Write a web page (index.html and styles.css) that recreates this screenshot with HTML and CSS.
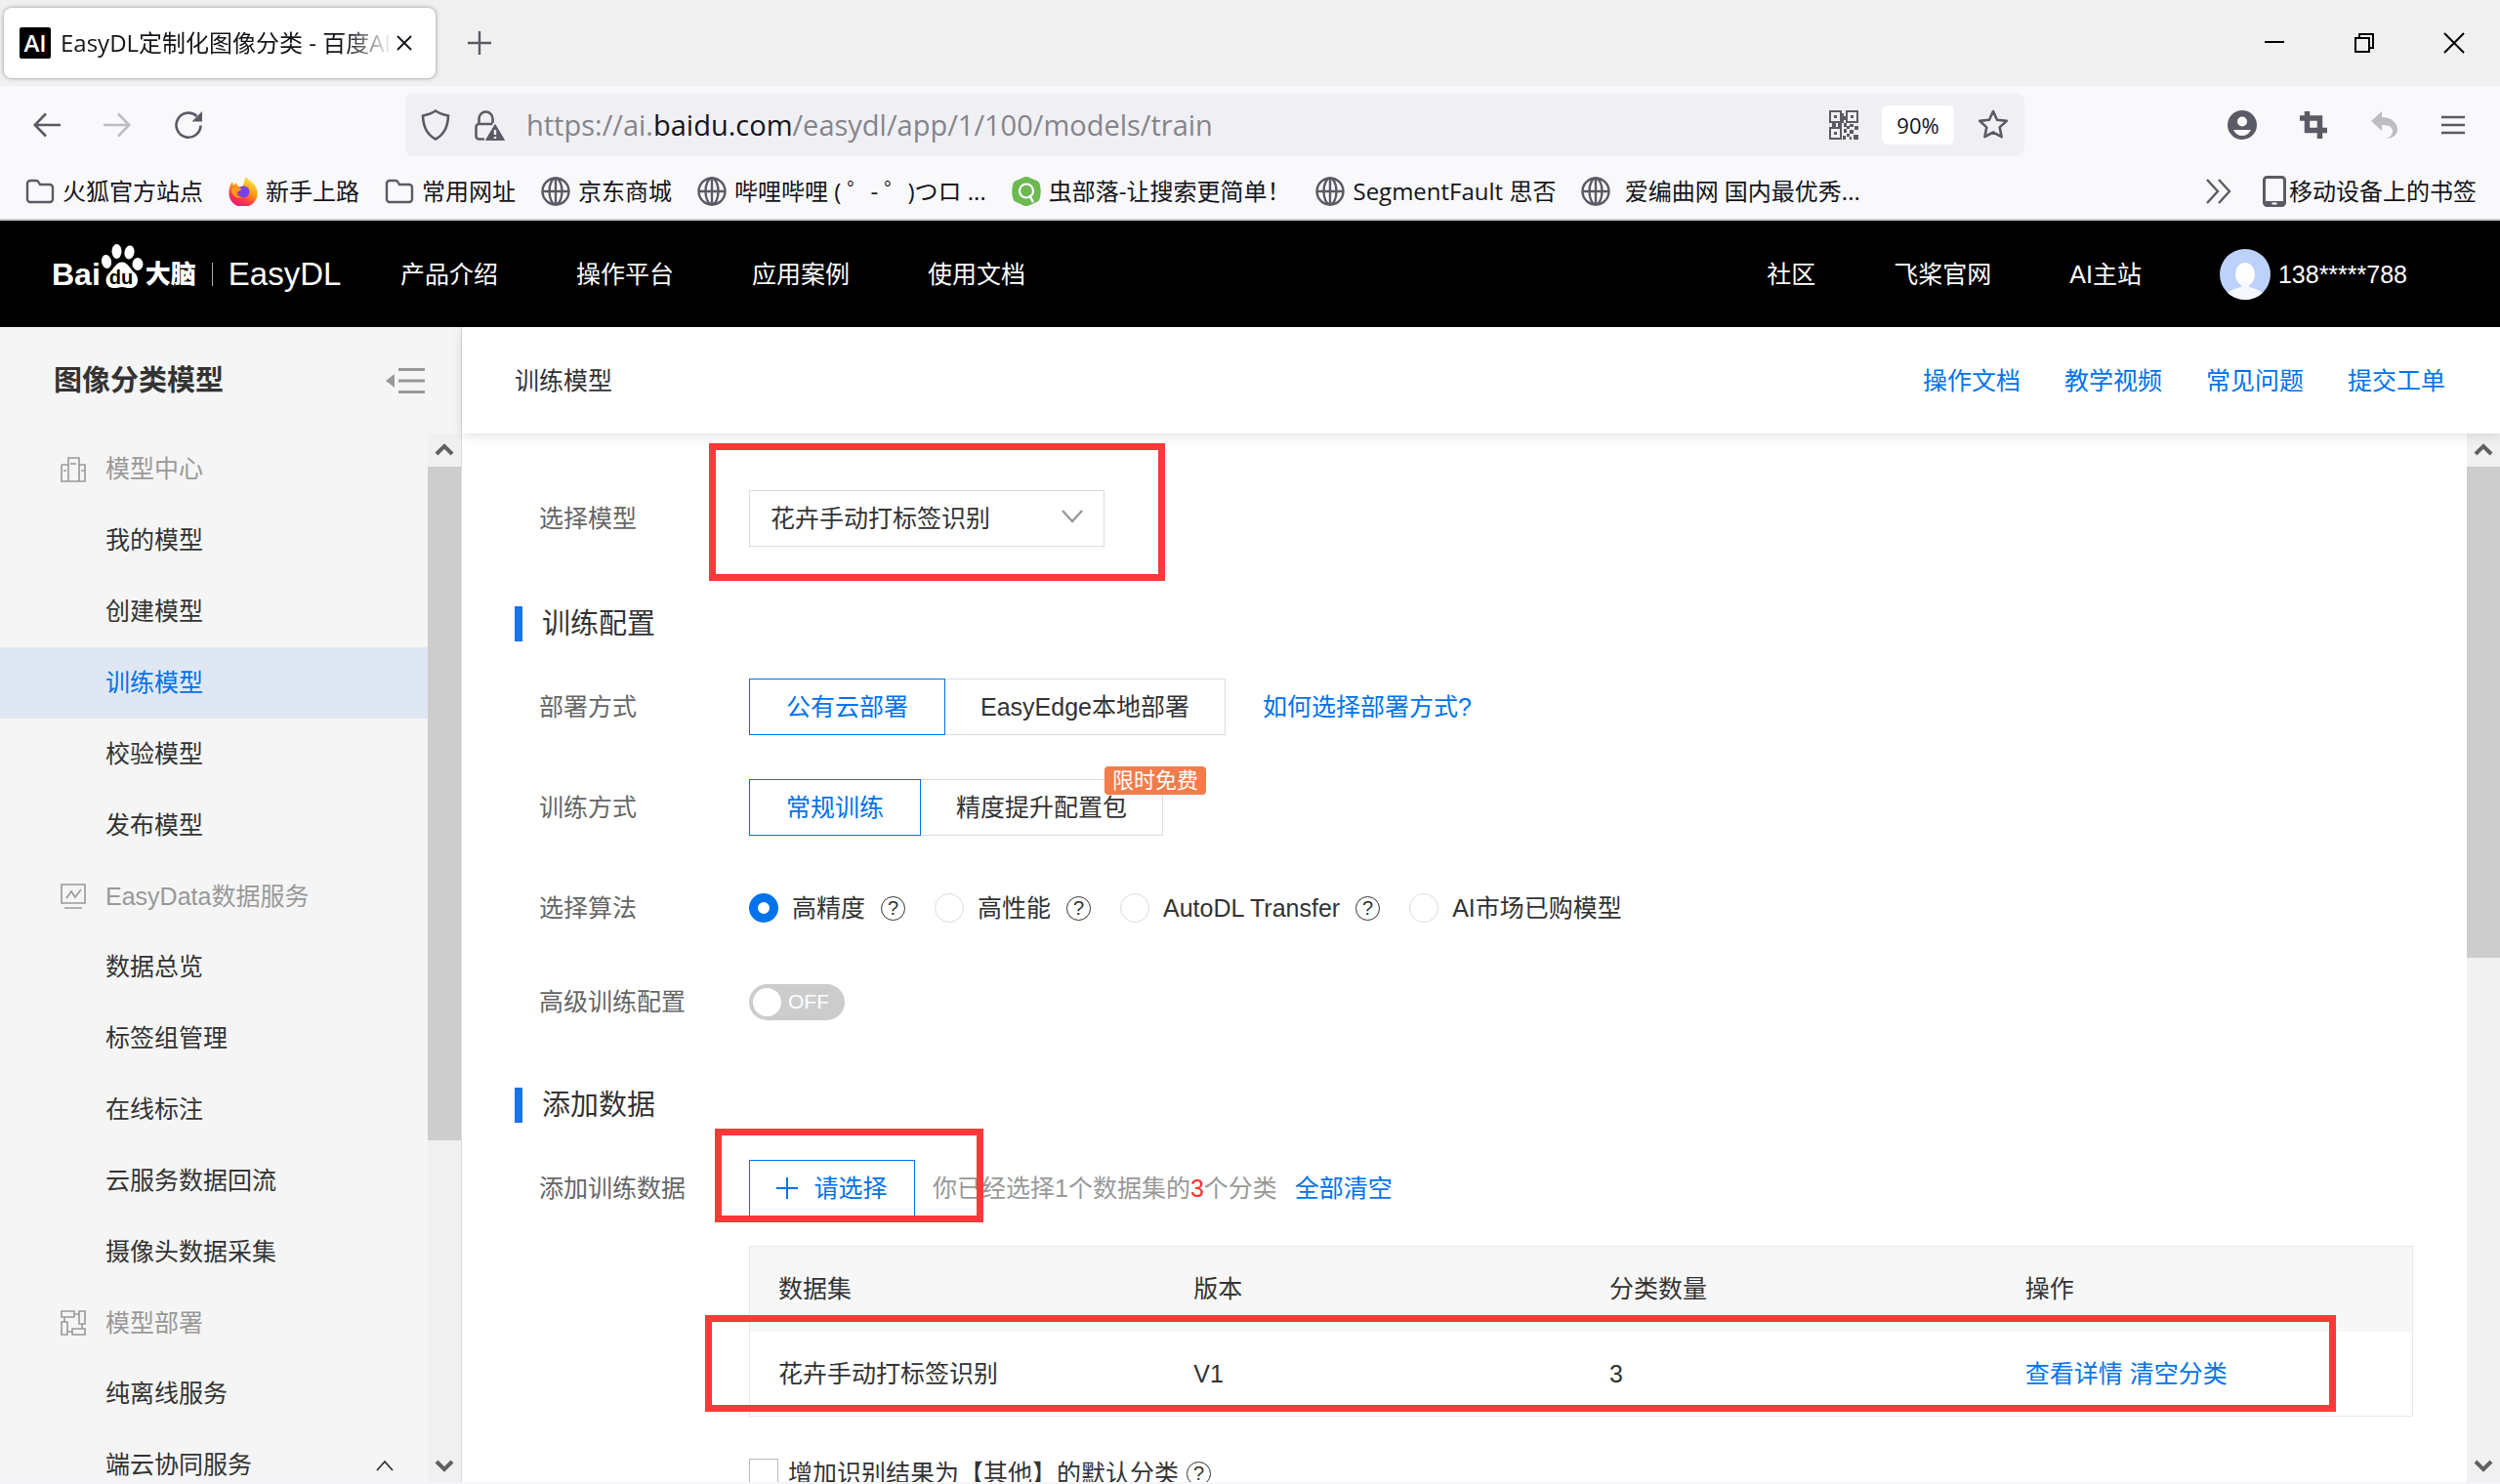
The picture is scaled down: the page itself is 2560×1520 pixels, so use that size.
FILE: index.html
```html
<!DOCTYPE html>
<html lang="zh-CN">
<head>
<meta charset="utf-8">
<title>EasyDL定制化图像分类 - 百度AI</title>
<link rel="stylesheet" href="styles.css">
</head>
<body>
<svg class="defs" aria-hidden="true">
  <symbol id="folder" viewBox="0 0 30 30"><path d="M5 4h6c1 0 2 .6 2.500 1.500L15 8h10a3 3 0 0 1 3 3v12a3 3 0 0 1-3 3H5a3 3 0 0 1-3-3V7a3 3 0 0 1 3-3z" fill="none" stroke="#5b5b66" stroke-width="2.400"/></symbol>
  <symbol id="globe" viewBox="0 0 30 30"><g fill="none" stroke="#5b5b66" stroke-width="2.400"><circle cx="15" cy="15" r="13.500"/><ellipse cx="15" cy="15" rx="6.500" ry="13.500"/><path d="M1.500 15h27M15 1.500v27"/></g></symbol>
  <symbol id="up" viewBox="0 0 34 34"><path d="M9 21l8-8 8 8" fill="none" stroke="#606060" stroke-width="4"/></symbol>
  <symbol id="down" viewBox="0 0 34 34"><path d="M9 13l8 8 8-8" fill="none" stroke="#606060" stroke-width="4"/></symbol>
</svg>

<header class="browser">
  <div class="tabbar">
    <div class="tab">
      <span class="favicon">AI</span>
      <span class="tab-title">EasyDL定制化图像分类 - 百度AI</span>
      <button class="icon-btn" aria-label="关闭标签页"><svg width="16" height="16" viewBox="0 0 16 16"><path d="M1 1l14 14M15 1L1 15" stroke="#15141a" stroke-width="1.800"/></svg></button>
    </div>
    <button class="icon-btn new-tab" aria-label="新建标签页"><svg width="24" height="24" viewBox="0 0 24 24"><path d="M12 0v24M0 12h24" stroke="#5b5b66" stroke-width="2.400"/></svg></button>
    <div class="window-controls">
      <button class="icon-btn" aria-label="最小化"><svg width="22" height="22" viewBox="0 0 22 22"><path d="M1 10h20" stroke="#000" stroke-width="2"/></svg></button>
      <button class="icon-btn" aria-label="还原"><svg width="22" height="22" viewBox="0 0 22 22"><path d="M2 6h14v14H2zM6 6V2h14v14h-4" fill="none" stroke="#000" stroke-width="2"/></svg></button>
      <button class="icon-btn" aria-label="关闭"><svg width="22" height="22" viewBox="0 0 22 22"><path d="M1 1l20 20M21 1L1 21" stroke="#000" stroke-width="2"/></svg></button>
    </div>
  </div>

  <div class="toolbar">
    <div class="nav-buttons">
      <button class="icon-btn" aria-label="后退"><svg width="28" height="28" viewBox="0 0 28 28"><path d="M28 14H2M13 2.500L1.700 14 13 25.500" fill="none" stroke="#5b5b66" stroke-width="2.600"/></svg></button>
      <button class="icon-btn" aria-label="前进" disabled><svg width="28" height="28" viewBox="0 0 28 28"><path d="M0 14h26M15 2.500L26.300 14 15 25.500" fill="none" stroke="#bdbdc2" stroke-width="2.600"/></svg></button>
      <button class="icon-btn" aria-label="刷新"><svg width="30" height="30" viewBox="0 0 30 30"><path d="M27.500 15.500A12.500 12.500 0 1 1 23.500 6" fill="none" stroke="#5b5b66" stroke-width="2.600"/><path d="M29 1v10.500H18.500z" fill="#5b5b66"/></svg></button>
    </div>
    <div class="urlbar">
      <svg width="30" height="32" viewBox="0 0 30 32"><path d="M15 1.500c4 3 8 4 13 5-.3 11-3.500 19-13 24C5.500 25.500 2.300 17.500 2 6.500c5-1 9-2 13-5z" fill="none" stroke="#5b5b66" stroke-width="2.600"/></svg>
      <svg width="32" height="32" viewBox="0 0 32 32"><g fill="none" stroke="#5b5b66" stroke-width="2.600"><path d="M5.500 14V9.500a7 7 0 0 1 14 0V14"/><path d="M11 30.500H5.500a3 3 0 0 1-3-3V18a3 3 0 0 1 3-3h14"/></g><path d="M22 15.500l9.500 16h-19z" fill="#5b5b66" stroke="#5b5b66"/><path d="M22 21v5M22 28v2" stroke="#fff" stroke-width="2.400"/></svg>
      <div class="url" role="textbox" aria-label="地址栏">https://ai.<span>baidu.com</span>/easydl/app/1/100/models/train</div>
      <button class="icon-btn" aria-label="二维码"><svg width="30" height="30" viewBox="0 0 30 30"><g fill="none" stroke="#5b5b66" stroke-width="2"><path d="M1 1h11v11H1zM18 1h11v11H18zM1 18h11v11H1z"/></g><path fill="#5b5b66" d="M5 5h3v3H5zM22 5h3v3h-3zM5 22h3v3H5zM12 3h3v3h3v4h-3v3h-3zM3 13h4v4H3zM9 13h4v4H9zM15 13h3v4h-3zM21 14h4v3h-4zM26 16h4v4h-4zM15 19h3v4h-3zM18 16h3v3h-3zM21 20h4v4h-4zM18 24h3v3h-3zM25 25h5v5h-5zM14 26h3v4h-3zM21 27h2v3h-2z"/></svg></button>
      <button class="zoom-level">90%</button>
      <button class="icon-btn" aria-label="收藏"><svg width="32" height="32" viewBox="0 0 32 32"><path d="M16 2l4 8.700 9.800 1.200-7.100 6.500 1.900 9.700-8.600-4.600-8.600 4.600 1.900-9.700-7.100-6.500 9.800-1.200z" fill="none" stroke="#5b5b66" stroke-width="2.600" stroke-linejoin="round"/></svg></button>
    </div>
    <div class="tool-buttons">
      <button class="icon-btn" aria-label="账户"><svg width="30" height="30" viewBox="0 0 30 30"><circle cx="15" cy="15" r="15" fill="#5b5b66"/><circle cx="15" cy="11.500" r="5" fill="#f9f9fb"/><path d="M6 20h18c-2 4-5 6-9 6s-7-2-9-6z" fill="#f9f9fb"/></svg></button>
      <button class="icon-btn" aria-label="截图"><svg width="30" height="30" viewBox="0 0 30 30"><path d="M8.500 1v19.500H29M1 8h20.500v21" fill="none" stroke="#5b5b66" stroke-width="5.500"/></svg></button>
      <button class="icon-btn" aria-label="撤销" disabled><svg width="30" height="30" viewBox="0 0 30 30"><path d="M12 1v6c10 0 16 6 16 13 0 4-3 8-11 9 5-3 6-5 6-8 0-4-4-6-11-6v6L1 11z" fill="#bdbdc2"/></svg></button>
      <button class="icon-btn" aria-label="菜单"><svg width="24" height="24" viewBox="0 0 24 24"><path d="M0 4h24M0 12h24M0 20h24" stroke="#5b5b66" stroke-width="2.400"/></svg></button>
    </div>
  </div>

  <nav class="bookmarks" aria-label="书签">
    <a href="#"><svg><use href="#folder"/></svg>火狐官方站点</a>
    <a href="#"><svg viewBox="0 0 30 30"><defs><linearGradient id="fx" x1=".8" y1="0" x2=".3" y2="1"><stop offset="0" stop-color="#fff44f"/><stop offset=".45" stop-color="#ff980e"/><stop offset=".75" stop-color="#ff3647"/><stop offset="1" stop-color="#e31587"/></linearGradient></defs><path d="M19 0c0 4 5 4 8 9 2 3 3 6 2.500 9A14.500 13.500 0 0 1 .5 17C.5 11 2 8 4 5l1 4 3-3c0 3 2 4 4 4 3 0 3-2 4-4 0-3 1-5 3-6z" fill="url(#fx)"/><circle cx="15.500" cy="15.500" r="6" fill="#7543e3"/><path d="M3 12c4-3 8-1 11 1-3 0-3 3-6 3 0 3 3 5 7 5-7 3-13-3-12-9z" fill="#ff9a1f"/></svg>新手上路</a>
    <a href="#"><svg><use href="#folder"/></svg>常用网址</a>
    <a href="#"><svg><use href="#globe"/></svg>京东商城</a>
    <a href="#"><svg><use href="#globe"/></svg>哔哩哔哩 ( ゜- ゜)つロ ...</a>
    <a href="#"><svg viewBox="0 0 30 30"><path d="M15 0c3 0 5 2 8 3 4 1 6 3 6 6 1 4 1 8 0 12 0 3-2 5-6 6-3 1-5 3-8 3s-5-2-8-3c-4-1-6-3-6-6-1-4-1-8 0-12 0-3 2-5 6-6 3-1 5-3 8-3z" fill="#6cb950"/><circle cx="15" cy="14.500" r="7" fill="none" stroke="#fff" stroke-width="2.200"/><path d="M18 19l4 7" stroke="#fff" stroke-width="2.400"/></svg>虫部落-让搜索更简单！</a>
    <a href="#"><svg><use href="#globe"/></svg>SegmentFault 思否</a>
    <a href="#"><svg><use href="#globe"/></svg><span> 爱编曲网 国内最优秀...</span></a>
    <div class="bookmarks-end">
      <button class="icon-btn" aria-label="更多书签"><svg class="more" width="26" height="26" viewBox="0 0 26 26"><path d="M1 1l11 12L1 25M13 1l11 12-11 12" fill="none" stroke="#5b5b66" stroke-width="2.400"/></svg></button>
      <a class="mobile" href="#"><svg class="phone" viewBox="0 0 24 32"><rect x="1.500" y="1.500" width="21" height="29" rx="3" fill="none" stroke="#5b5b66" stroke-width="3"/><path d="M1 26h22v4H1z" fill="#5b5b66"/><path d="M9.500 28.500h5" stroke="#fff" stroke-width="2"/></svg>移动设备上的书签</a>
    </div>
  </nav>
</header>

<div class="site-header">
  <a class="logo" href="#" aria-label="百度大脑 EasyDL">
    <span class="logo-bai">Bai</span>
    <svg class="paw" width="44" height="48" viewBox="0 0 44 48"><g fill="#fff"><ellipse cx="16.500" cy="7.500" rx="5" ry="7.500"/><ellipse cx="29.500" cy="8.500" rx="5" ry="7" transform="rotate(10 29.500 8.500)"/><ellipse cx="6" cy="18" rx="5" ry="7" transform="rotate(-10 6 18)"/><ellipse cx="38" cy="20.500" rx="5.500" ry="6.500"/><path d="M22 18.500c6 0 8 7 13 11 5 5 4 15-4 15.500-4 .5-6-1-9-1s-5 1.500-9 1c-8-.5-10-10-4-15.500 5-5 7-11 13-11z"/></g><text x="21" y="41" text-anchor="middle" class="paw-text">du</text></svg>
    <span class="logo-brain">大脑</span>
    <span class="logo-bar"></span>
    <span class="logo-name">EasyDL</span>
  </a>
  <nav class="site-nav">
    <a href="#">产品介绍</a><a href="#">操作平台</a><a href="#">应用案例</a><a href="#">使用文档</a>
  </nav>
  <nav class="site-nav user-nav">
    <a href="#">社区</a><a href="#">飞桨官网</a><a href="#">AI主站</a>
    <a class="user" href="#"><svg width="52" height="52" viewBox="0 0 52 52"><clipPath id="av"><circle cx="26" cy="26" r="26"/></clipPath><g clip-path="url(#av)"><path fill="#bdd2fb" d="M0 0h52v52H0z"/><ellipse cx="26" cy="26" rx="10" ry="12" fill="#fff"/><path d="M22 34h8v5c5 1 10 3 14 6v7H8v-7c4-3 9-5 14-6z" fill="#f5f8ff"/></g></svg>138*****788</a>
  </nav>
</div>

<div class="layout">
  <aside class="sidebar">
    <div class="sidebar-head">
      <h1>图像分类模型</h1>
      <button class="icon-btn" aria-label="收起菜单"><svg width="40" height="26" viewBox="0 0 40 26"><path d="M13 1.500h27M13 13h27M13 24.500h27" stroke="#999" stroke-width="3"/><path d="M9 6v14L0 13z" fill="#999"/></svg></button>
    </div>
    <div class="scroll-area">
      <ul class="menu">
        <li class="group"><svg viewBox="0 0 26 26"><path d="M8 25V1h11v24M1 8h7M19 8h6v17H1V8M10 7h6M3 14h3M21 14h3" fill="none" stroke="#999" stroke-width="1.600"/></svg>模型中心</li>
        <li><a href="#">我的模型</a></li>
        <li><a href="#">创建模型</a></li>
        <li><a class="active" href="#">训练模型</a></li>
        <li><a href="#">校验模型</a></li>
        <li><a href="#">发布模型</a></li>
        <li class="group"><svg viewBox="0 0 26 26"><path d="M1 1h24v19H1zM4 25h18M6 15l5-7 4 6 6-8" fill="none" stroke="#999" stroke-width="1.600"/></svg>EasyData数据服务</li>
        <li><a href="#">数据总览</a></li>
        <li><a href="#">标签组管理</a></li>
        <li><a href="#">在线标注</a></li>
        <li><a href="#">云服务数据回流</a></li>
        <li><a href="#">摄像头数据采集</a></li>
        <li class="group"><svg viewBox="0 0 26 26"><path d="M1 1h13v6H1zM19 1h6v13h-6zM1 12h6v13H1zM12 19h13v6H12zM14 4h5M4 7v5M22 14v5M7 22h5" fill="none" stroke="#999" stroke-width="1.600"/></svg>模型部署</li>
        <li><a href="#">纯离线服务</a></li>
        <li><a href="#">端云协同服务<svg width="18" height="12" viewBox="0 0 18 12"><path d="M1 11l8-9 8 9" fill="none" stroke="#333" stroke-width="1.800"/></svg></a></li>
      </ul>
      <div class="scrollbar" aria-hidden="true">
        <svg><use href="#up"/></svg><div class="track side-track"><i></i></div><svg><use href="#down"/></svg>
      </div>
    </div>
  </aside>

  <main class="main">
    <div class="page-bar">
      <h2>训练模型</h2>
      <nav><a href="#">操作文档</a><a href="#">教学视频</a><a href="#">常见问题</a><a href="#">提交工单</a></nav>
    </div>
    <div class="scroll-area">
      <form class="form">
        <div class="row">
          <label class="label" for="model">选择模型</label>
          <div class="select-wrap">
            <select id="model"><option>花卉手动打标签识别</option></select>
            <svg class="chevron" width="22" height="14" viewBox="0 0 22 14"><path d="M1 1l10 11L21 1" fill="none" stroke="#999" stroke-width="2.400"/></svg>
            <i class="mark mark-model"></i>
          </div>
        </div>

        <h3>训练配置</h3>
        <div class="row">
          <span class="label">部署方式</span>
          <div class="segment"><button type="button" class="on">公有云部署</button><button type="button">EasyEdge本地部署</button></div>
          <a class="hint-link" href="#">如何选择部署方式?</a>
        </div>
        <div class="row spaced">
          <span class="label">训练方式</span>
          <div class="segment"><button type="button" class="on">常规训练</button><button type="button">精度提升配置包</button><span class="badge">限时免费</span></div>
        </div>
        <div class="row spaced">
          <span class="label">选择算法</span>
          <div class="radios">
            <label><input type="radio" name="algo" checked>高精度</label><button type="button" class="help">?</button>
            <label><input type="radio" name="algo">高性能</label><button type="button" class="help">?</button>
            <label><input type="radio" name="algo">AutoDL Transfer</label><button type="button" class="help">?</button>
            <label><input type="radio" name="algo">AI市场已购模型</label>
          </div>
        </div>
        <div class="row compact">
          <span class="label" id="adv">高级训练配置</span>
          <button type="button" class="switch" role="switch" aria-checked="false" aria-labelledby="adv"><i></i>OFF</button>
        </div>

        <h3>添加数据</h3>
        <div class="row">
          <span class="label">添加训练数据</span>
          <button type="button" class="pick"><svg width="22" height="22" viewBox="0 0 22 22"><path d="M11 0v22M0 11h22" stroke="#0073eb" stroke-width="2"/></svg>请选择</button>
          <span class="summary">你已经选择1个数据集的<b>3</b>个分类</span>
          <a href="#">全部清空</a>
          <i class="mark mark-pick"></i>
        </div>
        <div class="table-wrap">
          <table>
            <thead><tr><th>数据集</th><th>版本</th><th>分类数量</th><th>操作</th></tr></thead>
            <tbody><tr><td>花卉手动打标签识别</td><td>V1</td><td>3</td><td><a href="#">查看详情</a> <a href="#">清空分类</a></td></tr></tbody>
          </table>
          <i class="mark mark-row"></i>
        </div>
        <div class="other">
          <label><input type="checkbox">增加识别结果为【其他】的默认分类</label><button type="button" class="help">?</button>
        </div>
      </form>
      <div class="scrollbar" aria-hidden="true">
        <svg><use href="#up"/></svg><div class="track main-track"><i></i></div><svg><use href="#down"/></svg>
      </div>
    </div>
  </main>
</div>
</body>
</html>
```

FILE: styles.css
```css
* { box-sizing: border-box; }
html, body { margin: 0; height: 100%; }
body {
  display: flex;
  flex-direction: column;
  overflow: hidden;
  padding-bottom: 2px;
  background: #f4f5f8;
  color: #333;
  font: 25px/36px "Liberation Sans", "Noto Sans CJK SC", sans-serif;
}
button, select, input { margin: 0; font: inherit; color: inherit; }
button { padding: 0; border: 0; background: none; }
a { color: #0073eb; text-decoration: none; white-space: nowrap; }
h1, h2, h3, ul { margin: 0; padding: 0; }
ul { list-style: none; }
svg { display: block; flex: none; }
.defs { position: absolute; width: 0; height: 0; }
.icon-btn { display: flex; align-items: center; justify-content: center; flex: none; }

/* Browser window */
.browser {
  flex: none;
  border-bottom: 2px solid #ccc;
  background: #f9f9fb;
  color: #15141a;
  font: 24px/32px "Open Sans", "Noto Sans CJK SC", sans-serif;
}
.tabbar { display: flex; align-items: center; height: 88px; padding: 0 36px 0 4px; background: #f0f0f0; }
.tab {
  display: flex;
  align-items: center;
  width: 442px;
  height: 72px;
  padding: 0 24px 0 16px;
  border-radius: 8px;
  background: #fff;
  box-shadow: 0 0 4px rgba(0, 0, 0, .4);
}
.favicon {
  flex: none;
  width: 32px;
  border-radius: 2px;
  background: #000;
  color: #fff;
  text-align: center;
  font-size: 24px;
  font-weight: 600;
}
.tab-title {
  flex: 1;
  margin: 0 4px 0 10px;
  overflow: hidden;
  white-space: nowrap;
  mask-image: linear-gradient(to left, transparent, #000 48px);
}
.new-tab { margin-left: 33px; }
.window-controls { display: flex; gap: 70px; margin-left: auto; }

.toolbar { display: flex; align-items: center; height: 80px; padding: 0 36px 0 34px; }
.nav-buttons { display: flex; gap: 44px; width: 381px; }
.urlbar {
  display: flex;
  align-items: center;
  flex: 1;
  height: 64px;
  padding: 0 16px;
  border-radius: 8px;
  background: #f0f0f4;
  gap: 24px;
}
.url { flex: 1; margin-left: -2px; color: #85848b; font-size: 29px; white-space: nowrap; }
.url span { color: #15141a; }
.zoom-level { width: 74px; height: 40px; border-radius: 6px; background: #fff; font-size: 22px; }
.tool-buttons { display: flex; gap: 43px; margin-left: 208px; }

.bookmarks { display: flex; align-items: center; gap: 26px; height: 56px; padding: 0 24px 0 26px; }
.bookmarks a { display: flex; align-items: center; gap: 8px; color: #15141a; }
.bookmarks a > span { white-space: pre; }
.bookmarks a > svg { width: 30px; height: 30px; }
.bookmarks-end { display: flex; align-items: center; gap: 32px; margin-left: auto; }
.bookmarks .mobile { gap: 3px; }
.bookmarks .phone { width: 24px; height: 32px; }

/* Site header */
.site-header { display: flex; align-items: center; flex: none; height: 109px; padding: 0 95px 0 53px; background: #000; }
.logo { display: flex; align-items: center; width: 357px; color: #fff; line-height: 40px; }
.logo-bai { font-size: 32px; font-weight: 700; }
.paw { margin: -14px 2px 0 0; }
.paw-text { font-size: 20px; font-weight: 700; fill: #000; }
.logo-brain { font-size: 26px; font-weight: 900; }
.logo-bar { width: 1px; height: 24px; margin: 0 16px; background: #aaa; }
.logo-name { font-size: 33px; }
.site-nav { display: flex; align-items: center; gap: 80px; }
.site-nav a { color: #fff; }
.user-nav { margin-left: auto; }
.site-nav .user { display: flex; align-items: center; gap: 8px; }

/* Layout */
.layout { display: flex; flex: 1; min-height: 0; }
.sidebar { display: flex; flex-direction: column; flex: none; width: 473px; border-right: 1px solid #ddd; background: #f5f5f5; }
.sidebar-head { display: flex; align-items: center; justify-content: space-between; flex: none; height: 109px; padding: 0 37px 0 55px; }
.sidebar-head h1 { font-size: 29px; font-weight: 700; }
.scroll-area { display: flex; flex: 1; min-height: 0; }
.menu { flex: 1; overflow: hidden; }
.menu li { height: 73px; line-height: 73px; }
.menu .group { display: flex; align-items: center; gap: 20px; height: 73px; padding-left: 62px; color: #999; }
.menu .group ~ .group { height: 72px; }
.menu .group svg { width: 26px; height: 26px; }
.menu a { display: flex; align-items: center; justify-content: space-between; padding: 0 35px 0 108px; color: #333; }
.menu .active { background: #dfe7f3; color: #0073eb; }

.scrollbar { display: flex; flex-direction: column; flex: none; width: 34px; background: #f0f0f0; }
.scrollbar svg { width: 34px; height: 34px; }
.track { display: flex; flex-direction: column; flex: 1; }
.track i { background: #cdcdcd; }
.side-track i { height: 68.6%; }
.main-track i { height: 50%; }

.main { display: flex; flex-direction: column; flex: 1; min-width: 0; background: #fff; }
.page-bar {
  display: flex;
  align-items: center;
  justify-content: space-between;
  position: relative;
  flex: none;
  height: 109px;
  padding: 0 56px 0 54px;
  background: #fff;
  box-shadow: 0 2px 12px rgba(0, 0, 0, .12);
}
.page-bar h2 { font-size: 25px; font-weight: 400; }
.page-bar nav { display: flex; gap: 45px; }

/* Form */
.form { flex: 1; min-width: 0; overflow: hidden; padding: 58px 55px 0 54px; }
.form h3 { margin: 61px 0 38px; padding-left: 20px; border-left: 8px solid #1a73e8; font-size: 29px; font-weight: 400; }
.row { display: flex; align-items: center; position: relative; height: 58px; padding-left: 25px; white-space: nowrap; }
.spaced { margin-top: 45px; }
.compact { height: 54px; margin-top: 40px; }
.label { width: 215px; color: #666; }

.select-wrap { position: relative; width: 364px; }
.select-wrap select {
  display: block;
  width: 100%;
  height: 58px;
  padding: 0 21px;
  border: 1px solid #ddd;
  border-radius: 0;
  background: #fff;
  appearance: none;
}
.chevron { position: absolute; top: 20px; right: 22px; pointer-events: none; }

.segment { display: flex; position: relative; }
.segment button { height: 58px; padding: 0 36px; border: 1px solid #ddd; border-left: 0; background: #fff; }
.segment .on { padding: 0 37px; border: 1px solid #0073eb; color: #0073eb; }
.badge {
  position: absolute;
  top: -13px;
  right: -44px;
  padding: 0 8px;
  border-radius: 4px;
  background: #f27c4b;
  color: #fff;
  font-size: 22px;
  line-height: 29px;
}
.hint-link { margin-left: 38px; }

.radios { display: flex; align-items: center; }
.radios label { display: flex; align-items: center; gap: 14px; }
.radios .help { margin: 0 30px 0 16px; }
input[type="radio"], input[type="checkbox"] {
  flex: none;
  width: 30px;
  height: 30px;
  border: 1px solid #ddd;
  background: #fff;
  appearance: none;
}
input[type="radio"] { border-radius: 50%; }
input[type="radio"]:checked { border: 9px solid #0073eb; }
.help { width: 25px; height: 25px; border: 1px solid #333; border-radius: 50%; font-size: 20px; line-height: 23px; }

.switch { display: flex; align-items: center; gap: 7px; width: 98px; height: 37px; padding: 0 4px; border-radius: 19px; background: #ccc; color: #fff; font-size: 21px; }
.switch i { width: 29px; height: 29px; border-radius: 50%; background: #fff; }

.pick { display: flex; align-items: center; justify-content: center; gap: 16px; width: 170px; height: 58px; border: 1px solid #0073eb; color: #0073eb; }
.summary { margin: 0 18px; color: #999; }
.summary b { color: #f33; font-weight: 400; }

.table-wrap { position: relative; margin: 30px 0 43px 240px; }
table { width: 100%; border: 1px solid #e8e8e8; border-collapse: collapse; table-layout: fixed; }
th, td { height: 87px; padding: 0 29px; text-align: left; font-weight: 400; white-space: nowrap; }
th { background: #f7f7f7; }

.other { display: flex; align-items: center; gap: 8px; height: 30px; margin-left: 240px; white-space: nowrap; }
.other label { display: flex; align-items: center; gap: 10px; }
.other input[type="checkbox"] { border-color: #bbb; }

/* Red highlight frames drawn over the form */
.mark { position: absolute; border: 7px solid #fc3939; pointer-events: none; }
.mark-model { inset: -48px -62px -35px -41px; }
.mark-pick { top: -32px; left: 205px; width: 275px; height: 96px; }
.mark-row { inset: 71px 79px 5px -45px; }
```
